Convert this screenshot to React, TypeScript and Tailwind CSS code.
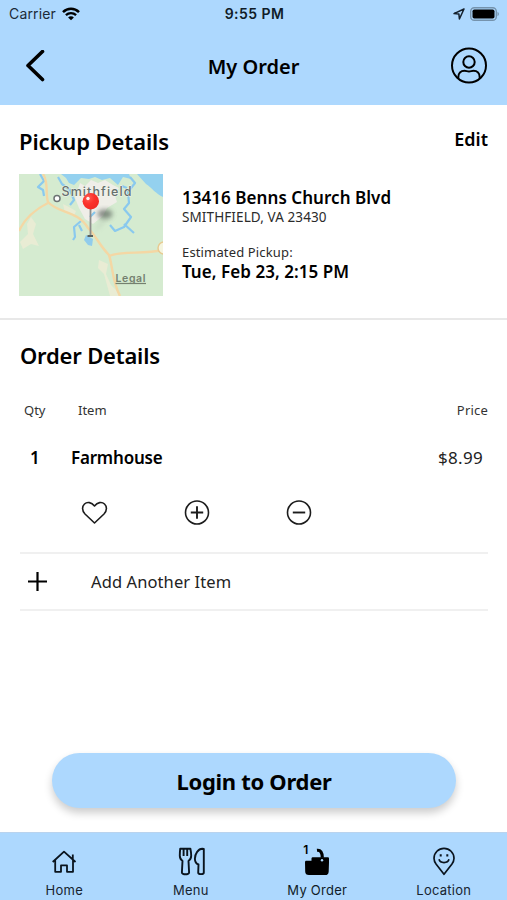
import type { ReactNode } from 'react';
import clsx from 'clsx';

interface NavItem {
  key: string;
  label: string;
  icon: ReactNode;
}

function StatusBar() {
  return (
    <div className="flex h-[27px] items-center justify-between pr-[7px] pl-[9px] font-['Inter',sans-serif] text-[14px] leading-[27px]">
      <div className="flex w-[150px] items-center gap-[6px]">
        <span className="tracking-[0.15px] text-[#1c2a38]">Carrier</span>
        <svg width="18" height="14" viewBox="0 0 18 14" fill="none" stroke="#000">
          <path d="M1 5.200C5.500.7 12.500.7 17 5.200" strokeWidth="2.500" />
          <path d="M3.900 8.200c2.900-2.800 7.300-2.800 10.200 0" strokeWidth="2.300" />
          <path d="M9 13.300 6.100 10.400c1.600-1.500 4.200-1.500 5.800 0z" fill="#000" stroke="none" />
        </svg>
      </div>
      <span className="font-semibold tracking-[0.45px] text-[#101c28]">9:55 PM</span>
      <div className="flex w-[150px] items-center justify-end gap-[5px]">
        <svg width="12" height="12" viewBox="0 0 12 12" fill="none" stroke="#14202c" strokeWidth="1.500" strokeLinejoin="round">
          <path d="M11 1 1 5.600l4.900.5.500 4.900z" />
        </svg>
        <svg width="30" height="14" viewBox="0 0 30 14">
          <rect x="0.700" y="0.700" width="25.600" height="12.600" rx="3.600" fill="none" stroke="#7593ad" strokeWidth="1.400" />
          <rect x="2.500" y="2.500" width="22" height="9" rx="1.800" fill="#000" />
          <path d="M27.500 4.800c1.900.8 1.900 3.600 0 4.400z" fill="#7593ad" />
        </svg>
      </div>
    </div>
  );
}

function Header() {
  return (
    <header className="h-[105px] bg-[#add8fe]">
      <StatusBar />
      <div className="flex h-[78px] items-center justify-between pr-[19px] pl-[25px]">
        <svg width="31" height="32" viewBox="0 0 31 32" fill="none" stroke="#000" strokeWidth="3.600" strokeLinecap="round" strokeLinejoin="round">
          <path d="M17.500 1.500 3 15.500l14.500 14" />
        </svg>
        <h1 className="pt-px pl-px text-[20px] leading-[28px] font-semibold">My Order</h1>
        <svg width="38" height="38" viewBox="0 0 38 38" fill="none" stroke="#000" strokeWidth="2">
          <circle cx="19" cy="18.500" r="17" />
          <circle cx="19" cy="15" r="5.700" />
          <path d="M8.300 31.500v-1.300c0-4 2.500-6.500 6.200-6.500 1.700 0 2.700.8 4.500.8s2.800-.8 4.500-.8c3.700 0 6.200 2.500 6.200 6.500v1.300" />
        </svg>
      </div>
    </header>
  );
}

function PickupMap() {
  return (
    <svg width="144" height="122" viewBox="0 0 144 122" className="shrink-0">
      <defs>
        <filter id="soft" x="-50%" y="-50%" width="200%" height="200%">
          <feGaussianBlur stdDeviation="2.500" />
        </filter>
        <radialGradient id="pin" cx="35%" cy="30%" r="75%">
          <stop offset="0" stopColor="#ff5a50" />
          <stop offset="0.500" stopColor="#fb322b" />
          <stop offset="1" stopColor="#f02a24" />
        </radialGradient>
      </defs>
      <rect width="144" height="122" fill="#d5ebd0" />
      {/* Built-up areas */}
      <path d="M61 9 66 12 72 6 79 9 86 6 94 11 100 14 96 22 98 28 88 34 84 42 74 50 66 45 60 34 56 24z" fill="#efeee8" />
      <path d="M44 30 50 33 57 37 55 42 46 39z M12 43 17 50 14 60 20 72 12 70 4 75 1 68 9 60 8 50z M80 86 89 90 87 100 92 111 98 117 100 122H91L85 100 79 94z" fill="#e9ecd4" />
      {/* Water */}
      <path d="M42 0H110L112 5 104 3 99 11 91 4 83 6 76 3 70 5 62 4 55 11 50 9 47 4z M118 0H144V23C137 20 133 14 127 10z" fill="#94d1ef" />
      <path d="M21 0 25 7 19 13 24 16 25 22M39 3 43 10 51 16 55 26 51 31M111 3 116 9 109 18 110 29 105 35 112 43 105 53 96 57 91 51M105 50 115 59M62 47 55 53 56 63 54 66M60 51 63 57M76 38 71 43M103 12 108 14" fill="none" stroke="#8ac9ee" strokeWidth="2.200" strokeLinejoin="round" />
      <path d="M67 61 74 65 73 72 69 71 65 66z" fill="#91ccec" />
      {/* Roads */}
      <g fill="none" stroke="#f4d7a4" strokeWidth="2.400">
        <path d="M24 0C30 9 26 19 29 28C40 40 58 36 69 54C78 63 80 71 90 81C94 93 93 107 101 122" />
        <path d="M29 29C15 36 5 46 0 57M90 82C104 76 124 81 144 76" />
      </g>
      <circle cx="145" cy="74" r="6" fill="#f4f5df" stroke="#e8ca91" strokeWidth="1.500" />
      <text x="42.500" y="22" textLength="70" fontSize="12.500" fontWeight="500" fill="#66706d" stroke="#f1f5ec" strokeWidth="1" paintOrder="stroke" fontFamily="Inter, sans-serif">
        Smithfield
      </text>
      <circle cx="38" cy="24.500" r="3" fill="#fff" stroke="#6d7474" strokeWidth="1.500" />
      <path d="M74 58 84 45 91 43 80 54z" fill="#8a948a" opacity="0.250" filter="url(#soft)" />
      <ellipse cx="86" cy="40" rx="7.500" ry="4.500" fill="#59615a" opacity="0.700" filter="url(#soft)" />
      <path d="M71.500 33V61" stroke="#8d8c89" strokeWidth="1.800" />
      <path d="M68.500 62h5.500" stroke="#596260" strokeWidth="2" />
      <circle cx="71.800" cy="27.200" r="8.200" fill="url(#pin)" />
      <circle cx="69" cy="24.500" r="1.700" fill="#fff" opacity="0.900" />
      <text x="96.500" y="107.500" textLength="30" fontSize="10.500" fontWeight="600" fill="#74806f" fontFamily="Inter, sans-serif">
        Legal
      </text>
      <path d="M96.500 109.500H127" stroke="#74806f" strokeWidth="1.200" />
    </svg>
  );
}

function PickupDetails() {
  return (
    <section className="h-[215px] border-b-2 border-[#e8e8e8] pt-[15px] pr-[19px] pl-[19px]">
      <div className="flex items-start justify-between">
        <h2 className="text-[22px] leading-[42px] font-semibold tracking-[-0.1px]">Pickup Details</h2>
        <button className="text-[18px] leading-[38px] font-semibold">Edit</button>
      </div>
      <div className="mt-[12px] flex gap-[19px]">
        <PickupMap />
        <div className="pt-[14px] whitespace-nowrap">
          <p className="text-[17px] leading-[20px] font-semibold tracking-[0.05px]">13416 Benns Church Blvd</p>
          <p className="text-[13.500px] leading-[18px] tracking-[0.1px] text-[#2b2b2b]">SMITHFIELD, VA 23430</p>
          <p className="mt-[17px] text-[13px] leading-[19px] tracking-[0.15px] text-[#2b2b2b]">Estimated Pickup:</p>
          <p className="text-[17px] leading-[20px] font-semibold tracking-[0.05px]">Tue, Feb 23, 2:15 PM</p>
        </div>
      </div>
    </section>
  );
}

function OrderDetails() {
  return (
    <section className="pt-[15px] pr-[19px] pl-[20px]">
      <h2 className="text-[22px] leading-[40px] font-semibold tracking-[-0.2px]">Order Details</h2>
      <div className="mt-[25px] flex pl-[4px] text-[13px] leading-[20px] text-[#333]">
        <span className="w-[54px]">Qty</span>
        <span>Item</span>
        <span className="ml-auto tracking-[0.2px]">Price</span>
      </div>
      <div className="mt-[28px] flex pr-[5px] text-[17px] leading-[20px]">
        <span className="w-[51px] pl-[10px] font-semibold">1</span>
        <span className="font-semibold tracking-[-0.2px]">Farmhouse</span>
        <span className="ml-auto tracking-[0.3px] text-[#222]">$8.99</span>
      </div>
      <div className="mt-[32px] flex gap-[76px] border-b-2 border-[#f0f0f0] pb-[26px] pl-[61px]">
        <svg width="27" height="26" viewBox="0 0 27 26" fill="none" stroke="#1c1c1c" strokeWidth="1.600" strokeLinejoin="round">
          <path d="M13.500 23 4 14C.7 10.600 1 6.300 3.500 4c2.700-2.500 7-1.800 10 2 3-3.800 7.300-4.500 10-2 2.500 2.300 2.800 6.600-.5 10z" />
        </svg>
        <svg width="26" height="26" viewBox="0 0 26 26" fill="none" stroke="#1c1c1c" strokeWidth="1.600">
          <circle cx="13" cy="12.500" r="11.500" />
          <path d="M6.800 12.500h12.400M13 6.300v12.400" strokeWidth="1.900" />
        </svg>
        <svg width="26" height="26" viewBox="0 0 26 26" fill="none" stroke="#1c1c1c" strokeWidth="1.600">
          <circle cx="13" cy="12.500" r="11.500" />
          <path d="M6.800 12.500h12.400" strokeWidth="1.900" />
        </svg>
      </div>
      <div className="flex h-[57px] items-center border-b-2 border-[#f0f0f0] pl-[8px]">
        <svg width="19" height="19" viewBox="0 0 19 19" stroke="#000" strokeWidth="2.200">
          <path d="M0 9.500h19M9.500 0v19" />
        </svg>
        <span className="ml-[44px] pt-[2px] text-[16.500px] tracking-[0.1px] text-[#222]">Add Another Item</span>
      </div>
    </section>
  );
}

const navItems: NavItem[] = [
  {
    key: 'home',
    label: 'Home',
    icon: (
      <svg width="26" height="30" viewBox="0 0 26 30" fill="none" stroke="#0a141e" strokeWidth="1.800" strokeLinejoin="round">
        <path d="M1.700 16 13 5.700 24.500 16M4.200 14v11.800H10v-6.400h6v6.400h6V14M21.800 13V8.500" />
      </svg>
    ),
  },
  {
    key: 'menu',
    label: 'Menu',
    icon: (
      <svg width="28" height="30" viewBox="0 0 28 30" fill="none" stroke="#0a141e" strokeWidth="1.900" strokeLinejoin="round">
        <path d="M3.200 2.800H13.400c.5 2.500.8 4.500.8 7 0 2.400-1 4-2.700 5.200l.6 11.500c.1 2.400-7.300 2.400-7.200 0L5.500 15c-1.700-1.200-2.700-2.800-2.700-5.200 0-2.500.1-4.500.4-7zM6.600 3V10M10.200 3V10" />
        <path d="M26.800 3V26.500c0 2.200-5.600 2.200-5.600 0l.3-8c-2.500-1-3.600-3-3.600-5.800 0-5 3.500-9.900 7.300-9.900z" />
      </svg>
    ),
  },
  {
    key: 'order',
    label: 'My Order',
    icon: (
      <svg width="26" height="30" viewBox="0 0 26 30">
        <path d="M1 16.300c0-1 .500-1.500 1.300-1.500h5.200V12.600c0-.8.700-1.300 1.700-1.300h14.300c1 0 1.500.5 1.500 1.300v3.800l-.3 9c-.2 2.600-1.300 3.600-3.500 3.600H5C2.500 29 1.200 27.900 1.200 25.500z" />
        <path d="M13 4.300c3.500-.5 5.300 2.200 5.300 7.500" fill="none" stroke="#000" strokeWidth="3.200" />
        <circle cx="18" cy="14.300" r="1.200" fill="#add8fe" />
      </svg>
    ),
  },
  {
    key: 'location',
    label: 'Location',
    icon: (
      <svg width="24" height="30" viewBox="0 0 24 30" fill="none" stroke="#0a141e" strokeWidth="1.700" strokeLinejoin="round">
        <path d="M12 28.300 4.200 18.300C2.800 16.400 2 14.600 2 12.300a10 10 0 0 1 20 0c0 2.300-.8 4.100-2.200 6z" />
        <path d="M7 13.300c1.200 4.300 8.800 4.300 10 0" />
        <path d="M8.700 8.300v2.200M15.300 8.300v2.200" strokeWidth="2" />
      </svg>
    ),
  },
];

function BottomNav() {
  return (
    <nav className="grid h-[68px] grid-cols-4 border-t border-[#b9d3ee] bg-[#add8fe] pt-[13px] pl-px">
      {navItems.map((item) => (
        <div key={item.key} className="flex flex-col items-center">
          <div className="relative">
            {item.icon}
            {item.key === 'order' && (
              <span className="absolute -top-[2px] -left-[1px] font-['Inter',sans-serif] text-[12px] leading-[12px] font-semibold">1</span>
            )}
          </div>
          <span
            className={clsx(
              "mt-[5px] font-['Inter',sans-serif] text-[13px] leading-[18px] tracking-[0.25px]",
              item.key === 'order' ? 'text-[#101c28]' : 'text-[#172430]'
            )}
          >
            {item.label}
          </span>
        </div>
      ))}
    </nav>
  );
}

export default function App() {
  return (
    <div className="flex h-[900px] w-[507px] flex-col overflow-hidden bg-white font-['Noto_Sans',sans-serif] text-black">
      <Header />
      <PickupDetails />
      <OrderDetails />
      <div className="mt-auto px-[52px] pb-[24px]">
        <button className="h-[55px] w-[404px] rounded-full bg-[#add8fe] pt-px text-[22px] font-bold tracking-[-0.3px] shadow-[0_5px_8px_rgba(0,0,0,0.2)]">
          Login to Order
        </button>
      </div>
      <BottomNav />
    </div>
  );
}
